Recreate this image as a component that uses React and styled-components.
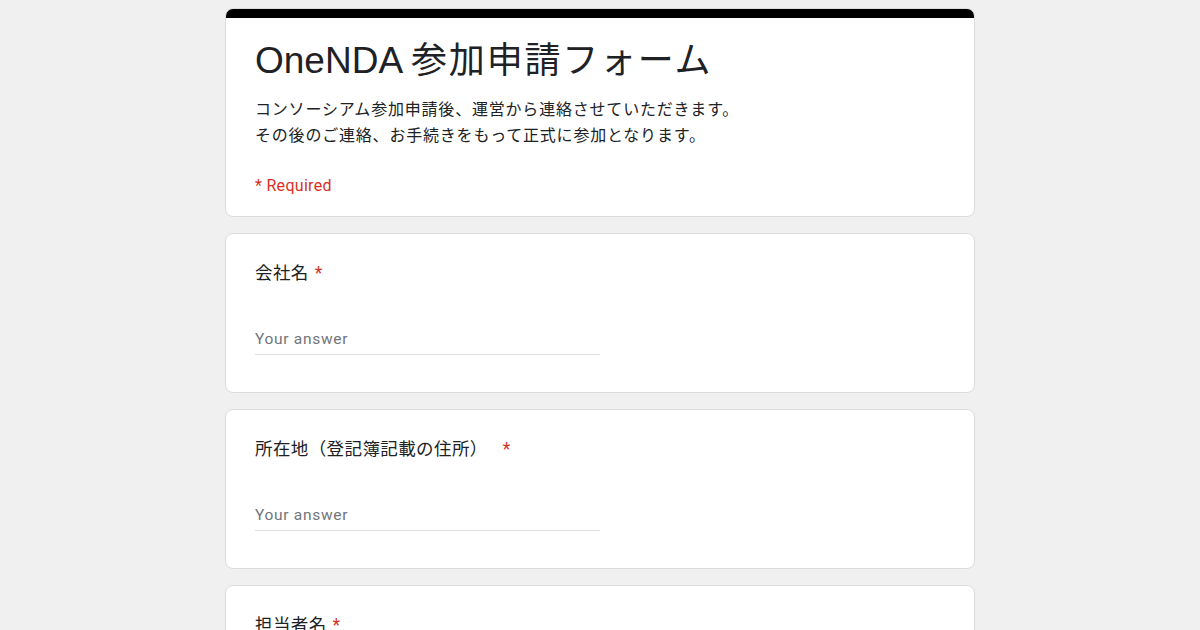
import React from "react";
import styled, { createGlobalStyle } from "styled-components";

const GlobalStyle = createGlobalStyle`
  body {
    margin: 0;
    background-color: #f0f0f0;
    font-family: Roboto, "Noto Sans CJK JP", sans-serif;
    color: #202124;
  }
`;

const Page = styled.div`
  display: flex;
  flex-direction: column;
  align-items: center;
  gap: 16px;
  padding-top: 8px;
  height: 630px;
  overflow: hidden;
`;

const Card = styled.div`
  width: 750px;
  box-sizing: border-box;
  background-color: #fff;
  border: 1px solid #dadce0;
  border-radius: 8px;
  overflow: hidden;
  flex-shrink: 0;
`;

const TopBar = styled.div`
  height: 10px;
  background-color: #000;
  margin: -1px -1px 0;
`;

const Body = styled.div`
  padding: ${(p) => p.$pad};
`;

const Title = styled.div`
  display: flex;
  align-items: baseline;
  height: 40px;
  font-family: "Noto Sans CJK JP", sans-serif;
  font-size: 36px;
  line-height: 40px;
  letter-spacing: 1.8px;
  white-space: nowrap;
`;

const Latin = styled.span`
  font-family: "Liberation Sans", Arial, sans-serif;
  font-size: 37px;
  letter-spacing: 0;
  margin-right: 8px;
`;

const Description = styled.div`
  margin-top: 20px;
  font-size: 16px;
  line-height: 26px;
  letter-spacing: 0.8px;
`;

const Required = styled.div`
  margin-top: 27px;
  font-size: 16px;
  line-height: 20px;
  letter-spacing: 0.3px;
  color: #d93025;
`;

const Question = styled.div`
  font-size: 17.5px;
  line-height: 24px;
  letter-spacing: 0.4px;
`;

const Star = styled.span`
  color: #d93025;
  margin-left: ${(p) => p.$gap || "6px"};
`;

const Answer = styled.div`
  margin-top: 40px;
  width: 345px;
  height: 30px;
  box-sizing: border-box;
  border-bottom: 1px solid #e0e0e0;
  font-size: 15.5px;
  line-height: 28px;
  color: #70757a;
  letter-spacing: 0.7px;
`;

const questions = [
  { label: "会社名", gap: "6px" },
  { label: "所在地（登記簿記載の住所）", gap: "15px" },
  { label: "担当者名", gap: "6px" },
];

export default function App() {
  return (
    <>
      <GlobalStyle />
      <Page>
        <Card>
          <TopBar />
          <Body $pad="19px 29px 20px">
            <Title>
              <Latin>OneNDA</Latin>
              <span>参加申請フォーム</span>
            </Title>
            <Description>
              コンソーシアム参加申請後、運営から連絡させていただきます。
              <br />
              その後のご連絡、お手続きをもって正式に参加となります。
            </Description>
            <Required>* Required</Required>
          </Body>
        </Card>
        {questions.map((q) => (
          <Card key={q.label}>
            <Body $pad="27px 29px 37px">
              <Question>
                {q.label}
                <Star $gap={q.gap}>*</Star>
              </Question>
              <Answer>Your answer</Answer>
            </Body>
          </Card>
        ))}
      </Page>
    </>
  );
}
